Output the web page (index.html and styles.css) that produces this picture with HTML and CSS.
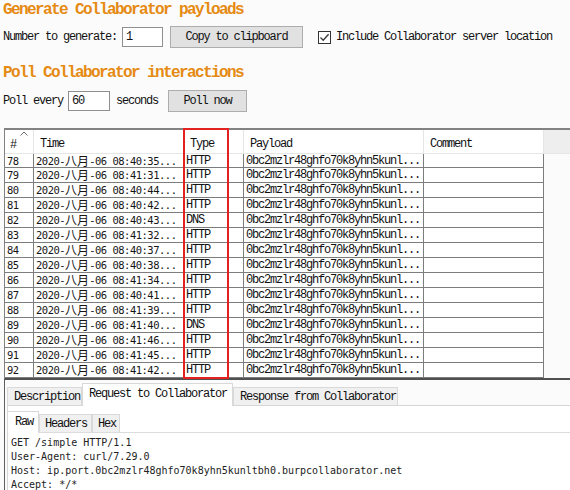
FILE: index.html
```html
<!DOCTYPE html>
<html>
<head>
<meta charset="utf-8">
<link rel="stylesheet" href="styles.css">
</head>
<body>
<div class="controls">
  <h2 class="title">Generate Collaborator payloads</h2>
  <div class="row row-gen">
    <span class="label">Number to generate:</span>
    <span class="field field-num">1</span>
    <span class="btn btn-copy">Copy to clipboard</span>
    <span class="check"><span class="box"><svg width="11" height="11" viewBox="0 0 11 11"><path d="M1.5 5.5 L4.2 8.2 L9.6 2.2" fill="none" stroke="#3a3a3a" stroke-width="1.3"/></svg></span>Include Collaborator server location</span>
  </div>
  <h2 class="title title-poll">Poll Collaborator interactions</h2>
  <div class="row row-poll">
    <span class="label">Poll every</span>
    <span class="field field-poll">60</span>
    <span class="label label-sec">seconds</span>
    <span class="btn btn-poll">Poll now</span>
  </div>
</div>

<div class="pane">
  <div class="grid head">
    <div class="hc hc-num"><svg class="caret" width="8" height="5" viewBox="0 0 8 5"><path d="M0.5 4.5 L4 1 L7.5 4.5" fill="none" stroke="#707070" stroke-width="1"/></svg><span class="hash">#</span></div>
    <div class="hc">Time</div>
    <div class="hc">Type</div>
    <div class="hc">Payload</div>
    <div class="hc">Comment</div>
    <div class="hfill"></div>
  </div>
  <div class="body">
    <div class="grid r first"><div class="c n">78</div><div class="c t">2020-<span class="cjk">八月</span>-06 08:40:35...</div><div class="c">HTTP</div><div class="c">0bc2mzlr48ghfo70k8yhn5kunl...</div><div class="c"></div><div class="f"></div></div>
    <div class="grid r"><div class="c n">79</div><div class="c t">2020-<span class="cjk">八月</span>-06 08:41:31...</div><div class="c">HTTP</div><div class="c">0bc2mzlr48ghfo70k8yhn5kunl...</div><div class="c"></div><div class="f"></div></div>
    <div class="grid r"><div class="c n">80</div><div class="c t">2020-<span class="cjk">八月</span>-06 08:40:44...</div><div class="c">HTTP</div><div class="c">0bc2mzlr48ghfo70k8yhn5kunl...</div><div class="c"></div><div class="f"></div></div>
    <div class="grid r"><div class="c n">81</div><div class="c t">2020-<span class="cjk">八月</span>-06 08:40:42...</div><div class="c">HTTP</div><div class="c">0bc2mzlr48ghfo70k8yhn5kunl...</div><div class="c"></div><div class="f"></div></div>
    <div class="grid r"><div class="c n">82</div><div class="c t">2020-<span class="cjk">八月</span>-06 08:40:43...</div><div class="c">DNS</div><div class="c">0bc2mzlr48ghfo70k8yhn5kunl...</div><div class="c"></div><div class="f"></div></div>
    <div class="grid r"><div class="c n">83</div><div class="c t">2020-<span class="cjk">八月</span>-06 08:41:32...</div><div class="c">HTTP</div><div class="c">0bc2mzlr48ghfo70k8yhn5kunl...</div><div class="c"></div><div class="f"></div></div>
    <div class="grid r"><div class="c n">84</div><div class="c t">2020-<span class="cjk">八月</span>-06 08:40:37...</div><div class="c">HTTP</div><div class="c">0bc2mzlr48ghfo70k8yhn5kunl...</div><div class="c"></div><div class="f"></div></div>
    <div class="grid r"><div class="c n">85</div><div class="c t">2020-<span class="cjk">八月</span>-06 08:40:38...</div><div class="c">HTTP</div><div class="c">0bc2mzlr48ghfo70k8yhn5kunl...</div><div class="c"></div><div class="f"></div></div>
    <div class="grid r"><div class="c n">86</div><div class="c t">2020-<span class="cjk">八月</span>-06 08:41:34...</div><div class="c">HTTP</div><div class="c">0bc2mzlr48ghfo70k8yhn5kunl...</div><div class="c"></div><div class="f"></div></div>
    <div class="grid r"><div class="c n">87</div><div class="c t">2020-<span class="cjk">八月</span>-06 08:40:41...</div><div class="c">HTTP</div><div class="c">0bc2mzlr48ghfo70k8yhn5kunl...</div><div class="c"></div><div class="f"></div></div>
    <div class="grid r"><div class="c n">88</div><div class="c t">2020-<span class="cjk">八月</span>-06 08:41:39...</div><div class="c">HTTP</div><div class="c">0bc2mzlr48ghfo70k8yhn5kunl...</div><div class="c"></div><div class="f"></div></div>
    <div class="grid r"><div class="c n">89</div><div class="c t">2020-<span class="cjk">八月</span>-06 08:41:40...</div><div class="c">DNS</div><div class="c">0bc2mzlr48ghfo70k8yhn5kunl...</div><div class="c"></div><div class="f"></div></div>
    <div class="grid r"><div class="c n">90</div><div class="c t">2020-<span class="cjk">八月</span>-06 08:41:46...</div><div class="c">HTTP</div><div class="c">0bc2mzlr48ghfo70k8yhn5kunl...</div><div class="c"></div><div class="f"></div></div>
    <div class="grid r"><div class="c n">91</div><div class="c t">2020-<span class="cjk">八月</span>-06 08:41:45...</div><div class="c">HTTP</div><div class="c">0bc2mzlr48ghfo70k8yhn5kunl...</div><div class="c"></div><div class="f"></div></div>
    <div class="grid r"><div class="c n">92</div><div class="c t">2020-<span class="cjk">八月</span>-06 08:41:42...</div><div class="c">HTTP</div><div class="c">0bc2mzlr48ghfo70k8yhn5kunl...</div><div class="c"></div><div class="f"></div></div>
  </div>
  <div class="highlight"></div>
</div>

<div class="detail">
  <div class="tabs">
    <span class="tab tab-desc">Description</span>
    <span class="tab tab-req active">Request to Collaborator</span>
    <span class="tab tab-resp">Response from Collaborator</span>
  </div>
  <div class="panel">
    <div class="subtabs">
      <span class="stab stab-raw active">Raw</span>
      <span class="stab stab-hdr">Headers</span>
      <span class="stab stab-hex">Hex</span>
    </div>
    <pre class="raw">GET /simple HTTP/1.1
User-Agent: curl/7.29.0
Host: ip.port.0bc2mzlr48ghfo70k8yhn5kunltbh0.burpcollaborator.net
Accept: */*</pre>
  </div>
</div>
</body>
</html>
```

FILE: styles.css
```css
* { box-sizing: border-box; }

html, body {
  margin: 0;
  padding: 0;
}

body {
  width: 570px;
  height: 490px;
  overflow: hidden;
  background: #fbfbfb;
  color: #111;
  font-family: "Liberation Mono", "Noto Sans CJK SC", monospace;
  font-size: 12px;
  letter-spacing: -1.2px;
}

.controls {
  padding-left: 3px;
}

.title {
  margin: 0;
  padding-top: 1px;
  font-size: 16px;
  line-height: 18px;
  font-weight: bold;
  color: #e58a12;
  letter-spacing: -1.6px;
}

.title-poll {
  margin-top: 15px;
}

.row {
  display: flex;
  align-items: center;
  height: 22px;
}

.row-gen { margin-top: 7px; }
.row-poll { margin-top: 8px; }

.label {
  white-space: nowrap;
  line-height: 14px;
}

.field {
  display: flex;
  align-items: center;
  height: 20px;
  background: #fff;
  border: 1px solid #8f8f8f;
  padding-left: 3px;
  margin-left: 5px;
}

.field-num { width: 41px; }
.field-poll { width: 42px; }

.label-sec { margin-left: 6px; }

.btn {
  display: flex;
  align-items: center;
  justify-content: center;
  height: 22px;
  background: #e1e1e1;
  border: 1px solid #adadad;
  white-space: nowrap;
}

.btn-copy {
  width: 133px;
  margin-left: 7px;
}

.btn-poll {
  width: 79px;
  margin-left: 10px;
}

.check {
  display: flex;
  align-items: center;
  margin-left: 15px;
  white-space: nowrap;
}

.box {
  display: flex;
  align-items: center;
  justify-content: center;
  width: 13px;
  height: 13px;
  background: #fff;
  border: 1px solid #333;
  margin-right: 5px;
}

/* table */
.pane {
  position: relative;
  margin-left: 4px;
  margin-top: 16px;
  border-top: 2px solid #828282;
  border-left: 1px solid #828282;
  border-bottom: 2px solid #505050;
}

.grid {
  display: grid;
  grid-template-columns: 29px 150px 60px 180px 120px 1fr;
}

.head {
  height: 24px;
  background: #eeeeee;
  border-bottom: 1px solid #e6e6e6;
}

.hc {
  background: #fff;
  border-right: 1px solid #e6e6e6;
  padding: 7px 0 0 6px;
  line-height: 14px;
  white-space: nowrap;
}

.hc-num {
  display: flex;
  flex-direction: column;
  align-items: flex-start;
  padding: 1px 0 0 5px;
}

.caret {
  display: block;
  margin-left: 10px;
}

.hash {
  line-height: 14px;
  margin-top: 2px;
}

.hfill {
  background: #eeeeee;
}

.body {
  background: #fbfbfb;
}

.r {
  height: 15px;
}

.r.first {
  height: 14px;
}

.c {
  background: #fff;
  border-right: 1px solid #7d7d7d;
  border-bottom: 1px solid #7d7d7d;
  padding-left: 2px;
  height: 100%;
  line-height: 14px;
  white-space: nowrap;
  overflow: hidden;
}

.r.first .c {
  line-height: 12px;
  padding-top: 1px;
}

.c.n, .c.t {
  font-family: "DejaVu Sans Mono", "Noto Sans CJK SC", monospace;
  font-size: 10.5px;
  letter-spacing: -0.5px;
  color: #151515;
}

.cjk {
  display: inline-block;
  vertical-align: top;
  height: 14px;
  overflow: hidden;
  font-family: "Noto Sans CJK SC", sans-serif;
  font-size: 12px;
  line-height: 14px;
  letter-spacing: 0;
}

.r.first .cjk {
  height: 12px;
  line-height: 12px;
}

.f {
  background: #fbfbfb;
}

.highlight {
  position: absolute;
  left: 178px;
  top: -2px;
  width: 46px;
  height: 251px;
  border: 2px solid #e42121;
  pointer-events: none;
}

/* detail */
.detail {
  margin-left: 4px;
  border-left: 1px solid #5f5f5f;
  padding: 3px 0 0 2px;
  height: 120px;
}

.tabs {
  display: flex;
  align-items: flex-end;
  height: 23px;
  border-bottom: 1px solid #d6d6d6;
}

.tab {
  display: flex;
  align-items: center;
  height: 18px;
  background: #f0f0f0;
  border: 1px solid #d9d9d9;
  border-bottom: none;
  padding-left: 6px;
  white-space: nowrap;
}

.tab-desc { width: 75px; }
.tab-req { width: 151px; }
.tab-resp { width: 165px; }

.tab.active {
  height: 23px;
  background: #fff;
  margin-bottom: -1px;
  padding-bottom: 2px;
}

.panel {
  background: #fff;
  border-left: 1px solid #d6d6d6;
  height: 100px;
  padding-top: 5px;
}

.subtabs {
  display: flex;
  align-items: flex-end;
  height: 21px;
  border-bottom: 1px solid #dcdcdc;
  box-sizing: content-box;
}

.stab {
  display: flex;
  align-items: center;
  height: 18px;
  background: #f0f0f0;
  border: 1px solid #d9d9d9;
  border-bottom: none;
  padding-left: 5px;
  white-space: nowrap;
}

.stab.active {
  height: 22px;
  background: #fff;
  margin-bottom: -1px;
  padding-left: 7px;
  padding-bottom: 2px;
}

.stab-raw { width: 32px; margin-left: -1px; }
.stab-hdr { width: 53px; }
.stab-hex { width: 28px; }

.raw {
  margin: 0;
  padding: 3px 0 0 3px;
  font-family: "DejaVu Sans Mono", monospace;
  font-size: 10px;
  line-height: 14px;
  letter-spacing: 0;
  color: #222;
}
```
